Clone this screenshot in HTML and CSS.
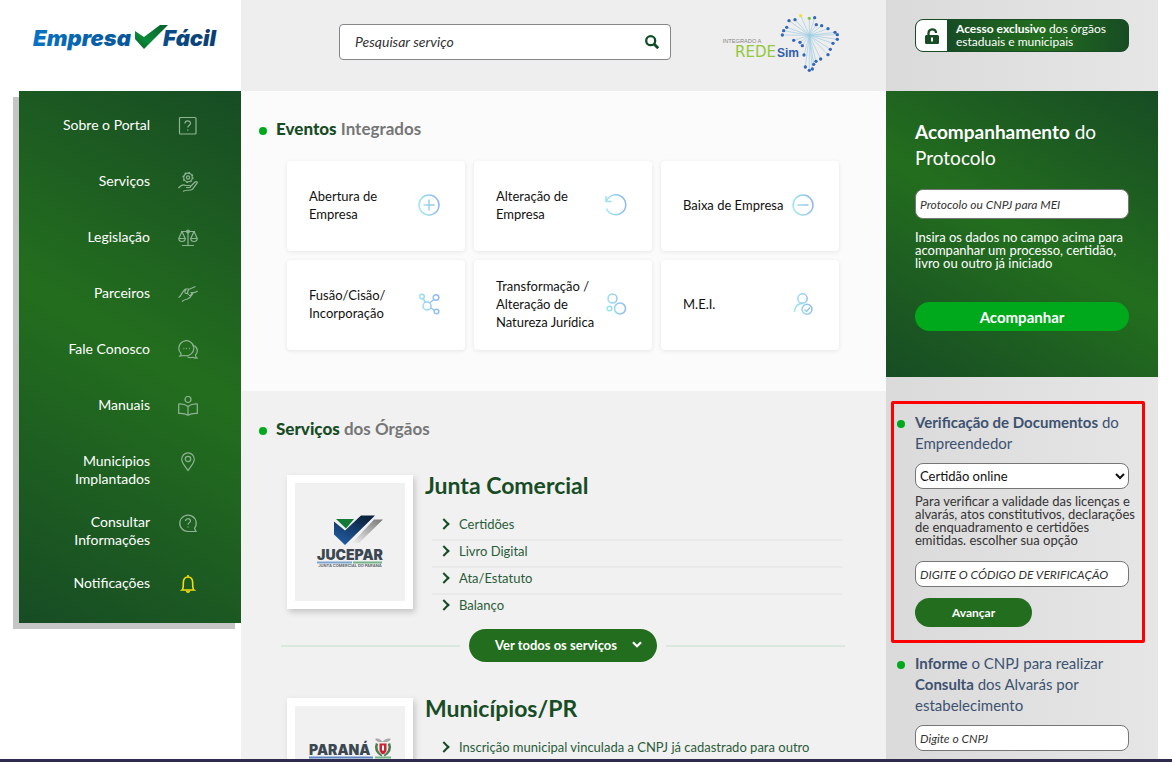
FILE: index.html
```html
<!DOCTYPE html>
<html lang="pt-BR">
<head>
<meta charset="utf-8">
<meta name="viewport" content="width=device-width, initial-scale=1">
<title>Empresa Fácil</title>
<link rel="stylesheet" href="styles.css">
</head>
<body>
<svg class="defs" aria-hidden="true">
  <defs>
    <linearGradient id="ice" gradientUnits="userSpaceOnUse" x1="0" y1="12" x2="22" y2="8">
      <stop offset="0" stop-color="#9debee"/><stop offset="1" stop-color="#8fb3f2"/>
    </linearGradient>
  </defs>
</svg>
<div class="page">
  <div class="left">
    <a class="brand" href="#" aria-label="Empresa Fácil">
      <svg width="190" height="34" viewBox="0 0 190 34">
        <defs>
          <linearGradient id="blue" gradientUnits="userSpaceOnUse" x1="0" y1="0" x2="188" y2="0">
            <stop offset="0" stop-color="#0773c4"/><stop offset="1" stop-color="#0a3d70"/>
          </linearGradient>
          <linearGradient id="tick" x1="0" y1="1" x2="1" y2="0">
            <stop offset="0" stop-color="#0d5a25"/><stop offset=".35" stop-color="#0a8a3a"/><stop offset="1" stop-color="#06602a"/>
          </linearGradient>
        </defs>
        <text class="brand-text" x="1" y="26" fill="url(#blue)">Empresa</text>
        <path d="M103 11l9 6 16-12h8l-24 24-9-10z" fill="url(#tick)"/>
        <text class="brand-text" x="131" y="26" fill="url(#blue)">Fácil</text>
      </svg>
    </a>
    <nav class="menu" aria-label="Menu principal">
      <ul class="menu-list">
        <li><a class="menu-item" href="#"><span class="menu-label">Sobre o Portal</span>
          <svg class="menu-icon" viewBox="0 0 20 20"><rect x="1.500" y="1.500" width="16.500" height="16.500" rx="1"/><path d="M7 7.500c0-3.500 5.500-3.500 5.500-.3 0 2-2.700 2-2.700 4.300M9.800 13.500v1.200"/></svg></a></li>
        <li><a class="menu-item" href="#"><span class="menu-label">Serviços</span>
          <svg class="menu-icon" viewBox="0 0 20 20"><circle cx="10" cy="5.500" r="4.300"/><circle cx="10" cy="5.500" r="1.600"/><circle cx="10" cy="5.500" r="5" stroke-dasharray="1.600 2.300"/><path d="M.5 16c3-3.500 5-4 7-2.500h4c1.500 0 1.500 2 0 2H8M12.500 14.500l4.500-4.500c1.200-1 3 0 2 1.200l-4.500 6c-3 2-7 0-9.500 2.300"/></svg></a></li>
        <li><a class="menu-item" href="#"><span class="menu-label">Legislação</span>
          <svg class="menu-icon" viewBox="0 0 20 20"><path d="M3 3.500h14M10 3v14M4 17.500h12M4 3.500L.8 10.500h6.400L4 3.500M16 3.500l-3.200 7h6.400l-3.200-7M.8 10.500c0 4 6.400 4 6.400 0M12.800 10.500c0 4 6.400 4 6.400 0"/><circle cx="10" cy="3.500" r="1.400"/></svg></a></li>
        <li><a class="menu-item" href="#"><span class="menu-label">Parceiros</span>
          <svg class="menu-icon" viewBox="0 0 20 20"><path d="M.5 13.500c3-1 3.500-6.500 7-8.500h4.500l5.500-2.500M8 5.500C5.500 8 7.500 10.500 9.500 9M11 5.500c-1.500 1.500-1.500 4-.5 5.500M12.500 8.500h3c2 0 3-.5 4-1.500M15.500 8.500c-1.500 2-2.500 5-6 6.500-2.500.3-4 1-5.500 2.500M13.500 8.500c.5 2-1 3-2.500 3"/></svg></a></li>
        <li><a class="menu-item" href="#"><span class="menu-label">Fale Conosco</span>
          <svg class="menu-icon" viewBox="0 0 20 20"><path d="M3 13.500a7.500 7.500 0 1 1 3.500 2L2 16c1-1 1.300-1.500 1-2.500M16.500 5.500c3.500 3 3.500 7 1 9.500 0 1.500.5 2.500 1.500 3-1.500.3-3 0-4-.7-2 .6-4 .4-5.500-.6"/><path d="M5.500 8.500h.8M8.200 8.500H9M11 8.500h.8" stroke-width="1.500"/></svg></a></li>
        <li><a class="menu-item" href="#"><span class="menu-label">Manuais</span>
          <svg class="menu-icon" viewBox="0 0 20 20"><circle cx="10" cy="3.500" r="3"/><path d="M10 10.500C7.500 8.500 4 7.800.7 8v9.500c3.300-.2 6.800.2 9.300 1.800 2.500-1.600 6-2 9.300-1.800V8c-3.300-.2-6.800.5-9.300 2.500v8.800"/></svg></a></li>
        <li><a class="menu-item" href="#"><span class="menu-label">Municípios Implantados</span>
          <svg class="menu-icon" viewBox="0 0 20 20"><path d="M10 18.500C7 14 3.700 11 3.700 7.200a6.300 6.300 0 0 1 12.600 0C16.300 11 13 14 10 18.500z"/><circle cx="10" cy="7" r="2.700"/></svg></a></li>
        <li><a class="menu-item" href="#"><span class="menu-label">Consultar Informações</span>
          <svg class="menu-icon" viewBox="0 0 20 20"><path d="M18 18.500h-8A8.200 8.200 0 1 1 16.500 15.300z"/><path d="M7.500 8c0-3 5-3 5-.2 0 1.800-2.500 1.900-2.500 3.900M10 13.500v1"/></svg></a></li>
        <li><a class="menu-item" href="#"><span class="menu-label">Notificações</span>
          <svg class="menu-icon bell" viewBox="0 0 20 20"><path d="M4 16h12c-1.500-1.200-1.300-3-1.300-7 0-3.700-1.700-6-4.700-6S5.300 5.300 5.300 9c0 4 .2 5.800-1.300 7zM10 1v2M8.500 17c.5 1.500 2.500 1.500 3 0"/></svg></a></li>
      </ul>
    </nav>
  </div>

  <main class="center">
    <header class="topbar">
      <form class="search" role="search">
        <input class="search-input" type="search" placeholder="Pesquisar serviço" aria-label="Pesquisar serviço">
        <button class="search-button" type="button" aria-label="Pesquisar">
          <svg width="14" height="14" viewBox="0 0 14 14" fill="none" stroke="#0f4d27"><circle cx="5.700" cy="5.700" r="4.500" stroke-width="2.300"/><path d="M9 9l4.200 4.200" stroke-width="2.800"/></svg>
        </button>
      </form>
      <a class="redesim" href="#" aria-label="Integrado a Redesim">
        <svg width="122" height="62" viewBox="60 36 366 186">
          <path d="M325 106L264 62M325 106L282 59M325 106L299 47M325 106V55M325 106L341 53M325 106L346 74M325 106L362 77M325 106L381 86M325 106L402 97M325 106L409 104M325 106L409 118M325 106L396 130M325 106L388 148M325 106L381 164M325 106L359 177M325 106L345 184M325 106L338 193M325 106L334 207M325 106V211M325 106L313 201M325 106L309 165M325 106L304 137M325 106L297 127M325 106L278 121M325 106L244 105M325 106L248 92M325 106L257 82" stroke="#9ccbe2" stroke-width="2"/>
          <g class="map-dots"><circle cx="264" cy="62" r="5"/><circle cx="282" cy="59" r="5"/><circle cx="341" cy="53" r="5"/><circle cx="346" cy="74" r="5"/><circle cx="362" cy="77" r="5"/><circle cx="381" cy="86" r="5"/><circle cx="402" cy="97" r="5"/><circle cx="409" cy="104" r="5"/><circle cx="409" cy="118" r="5"/><circle cx="396" cy="130" r="5"/><circle cx="388" cy="148" r="5"/><circle cx="381" cy="164" r="5"/><circle cx="359" cy="177" r="5"/><circle cx="345" cy="184" r="5"/><circle cx="338" cy="193" r="5"/><circle cx="334" cy="207" r="5"/><circle cx="325" cy="211" r="5"/><circle cx="313" cy="201" r="5"/><circle cx="309" cy="165" r="5"/><circle cx="304" cy="137" r="5"/><circle cx="297" cy="127" r="5"/><circle cx="278" cy="121" r="5"/><circle cx="244" cy="105" r="5"/><circle cx="248" cy="92" r="5"/><circle cx="257" cy="82" r="5"/></g>
          <circle cx="299" cy="47" r="5" fill="#ebe04a"/><circle cx="325" cy="55" r="5" fill="#85c441"/>
          <text class="rede-small" x="65" y="128">INTEGRADO A</text>
          <text class="rede" x="102" y="172">REDE</text>
          <text class="sim" x="228" y="172">Sim</text>
        </svg>
      </a>
    </header>

    <section class="events">
      <h2 class="title"><strong>Eventos</strong> Integrados</h2>
      <div class="cards">
        <a class="card" href="#"><span>Abertura de Empresa</span><svg class="card-icon" viewBox="0 0 22 22"><circle cx="11" cy="11" r="10"/><path d="M11 5.500v11M5.500 11h11"/></svg></a>
        <a class="card" href="#"><span>Alteração de Empresa</span><svg class="card-icon" viewBox="0 0 22 22"><path d="M1 2v5.500h5.500M1.500 7A10 10 0 1 1 1.500 14.500"/></svg></a>
        <a class="card" href="#"><span>Baixa de Empresa</span><svg class="card-icon" viewBox="0 0 22 22"><circle cx="11" cy="11" r="10"/><path d="M5.500 11.010L16.500 11"/></svg></a>
        <a class="card" href="#"><span>Fusão/Cisão/ Incorporação</span><svg class="card-icon" viewBox="0 0 22 22"><circle cx="9" cy="13" r="4"/><circle cx="4" cy="3.500" r="2.300"/><circle cx="18" cy="4.500" r="2.800"/><circle cx="18.500" cy="18.500" r="2.300"/><path d="M5 5.500l2.500 4M16 6.500l-4.500 3.500M12.700 14.800l3.700 2.600"/></svg></a>
        <a class="card" href="#"><span>Transformação / Alteração de Natureza Jurídica</span><svg class="card-icon" viewBox="0 0 22 22"><circle cx="7.500" cy="5.500" r="4.500"/><circle cx="15" cy="15.500" r="5.500"/><circle cx="4.500" cy="15.500" r="2.300"/></svg></a>
        <a class="card" href="#"><span>M.E.I.</span><svg class="card-icon" viewBox="0 0 22 22"><circle cx="10.500" cy="5.500" r="4.700"/><path d="M2.500 19c.3-5 3-8.500 8-8.500M12.500 16.500l2 2 3.500-4"/><circle cx="15" cy="16.200" r="5"/></svg></a>
      </div>
    </section>

    <section class="services">
      <h2 class="title"><strong>Serviços</strong> dos Órgãos</h2>
      <article class="agency">
        <div class="agency-logo">
          <svg class="logo-box" viewBox="0 0 110 118" role="img" aria-label="Jucepar">
            <defs>
              <linearGradient id="navy" x1="0" y1="1" x2=".6" y2="0"><stop offset="0" stop-color="#2363ad"/><stop offset="1" stop-color="#0c2340"/></linearGradient>
              <linearGradient id="grey" x1="0" y1="1" x2="1" y2="0"><stop offset="0" stop-color="#efefef"/><stop offset="1" stop-color="#777"/></linearGradient>
            </defs>
            <path d="M79 36.500h9L64 60h-7z" fill="url(#grey)"/>
            <path d="M41 36h18l-8 9.500z" fill="#147a38"/>
            <path d="M39 38.500l11 9L66 32.500h14L50 62 39 51.500z" fill="url(#navy)"/>
            <text class="jucepar" x="55" y="77">JUCEPAR</text>
            <path d="M22 79.500h35" stroke="#7ea5d2" stroke-width="2"/><path d="M58 79.500h29" stroke="#76b589" stroke-width="2"/>
            <text class="jucepar-sub" x="55" y="84">JUNTA COMERCIAL DO PARANÁ</text>
          </svg>
        </div>
        <div class="agency-body">
          <h3 class="agency-name">Junta Comercial</h3>
          <ul class="links">
            <li><a href="#">Certidões</a></li>
            <li><a href="#">Livro Digital</a></li>
            <li><a href="#">Ata/Estatuto</a></li>
            <li><a href="#">Balanço</a></li>
          </ul>
        </div>
      </article>
      <div class="more">
        <button class="more-button" type="button">Ver todos os serviços
          <svg width="10" height="7" viewBox="0 0 10 7" fill="none" stroke="#fff" stroke-width="2.200"><path d="M1 1.300l4 4 4-4"/></svg></button>
      </div>
      <article class="agency">
        <div class="agency-logo">
          <svg class="logo-box" viewBox="0 0 110 118" role="img" aria-label="Paraná">
            <text class="parana" x="14" y="49">PARANÁ</text>
            <path d="M14 51.500h64" stroke="#5c86bd" stroke-width="2"/><path d="M80 51.500h16" stroke="#76b589" stroke-width="2"/>
            <path d="M80 33c3-1 5 0 7.500 2.500 3-2.500 5-3.500 8.500-2.500-2 3-4 3-6 3h-4c-2 0-4 0-6-3z" fill="#aaa"/>
            <path d="M82 37.500c-2 5 0 9 5 12M94 37.500c2 5 0 9-5 12" fill="none" stroke="#4a7d52" stroke-width="2.500"/>
            <path d="M84 37h8v7c0 2-2 4-4 5-2-1-4-3-4-5z" fill="#c82634" stroke="#e8e8e8"/><path d="M88 39.500v5" stroke="#fff" stroke-width="2"/>
          </svg>
        </div>
        <div class="agency-body">
          <h3 class="agency-name">Municípios/PR</h3>
          <ul class="links">
            <li><a href="#">Inscrição municipal vinculada a CNPJ já cadastrado para outro</a></li>
          </ul>
        </div>
      </article>
    </section>
  </main>

  <aside class="right">
    <div class="access-area">
      <a class="access" href="#">
        <span class="access-lock"><svg width="16" height="16" viewBox="0 0 16 16"><rect x="1" y="7" width="14" height="9" rx="1.500" fill="#174c24"/><path d="M4.500 8V5.500c0-5.500 7.500-5.500 7.500-.5" fill="none" stroke="#174c24" stroke-width="2.300"/><path d="M8 9.500v4" stroke="#fff" stroke-width="2"/></svg></span>
        <span class="access-text"><strong>Acesso exclusivo</strong> dos órgãos estaduais e municipais</span>
      </a>
    </div>
    <form class="protocol">
      <h2 class="protocol-title"><strong>Acompanhamento</strong> do Protocolo</h2>
      <input class="field field-tall" type="text" placeholder="Protocolo ou CNPJ para MEI" aria-label="Protocolo ou CNPJ para MEI">
      <p class="hint">Insira os dados no campo acima para acompanhar um processo, certidão, livro ou outro já iniciado</p>
      <button class="track" type="button">Acompanhar</button>
    </form>
    <form class="side-form highlighted">
      <h2 class="side-title"><strong>Verificação de Documentos</strong> do Empreendedor</h2>
      <select class="field select" aria-label="Tipo de documento"><option>Certidão online</option></select>
      <p class="hint hint-dark">Para verificar a validade das licenças e alvarás, atos constitutivos, declarações de enquadramento e certidões emitidas. escolher sua opção</p>
      <input class="field" type="text" placeholder="DIGITE O CÓDIGO DE VERIFICAÇÃO" aria-label="Código de verificação">
      <button class="go" type="button">Avançar</button>
    </form>
    <form class="side-form">
      <h2 class="side-title"><strong>Informe</strong> o CNPJ para realizar <strong>Consulta</strong> dos Alvarás por estabelecimento</h2>
      <input class="field" type="text" placeholder="Digite o CNPJ" aria-label="CNPJ">
    </form>
  </aside>
</div>
<div class="bottom-edge"></div>
</body>
</html>
```
FILE: styles.css
```css
* { box-sizing: border-box; }

body {
  margin: 0;
  height: 100vh;
  display: flex;
  flex-direction: column;
  overflow: hidden;
  background: #fff;
  font-family: Lato, "Open Sans", sans-serif;
  font-size: 14px;
  line-height: 18px;
}

h2, h3, p, ul { margin: 0; padding: 0; }
ul { list-style: none; }
a { color: inherit; text-decoration: none; }
button, input, select { font: inherit; margin: 0; }
button { border: 0; cursor: pointer; }

.defs { position: absolute; width: 0; height: 0; }

.page {
  flex: 1;
  min-height: 0;
  overflow: hidden;
  display: grid;
  grid-template-columns: 241px 1fr 272px;
  padding-right: 14px;
}

.bottom-edge { height: 3px; background: #2f2b50; }

/* Left column */
.left { padding-left: 19px; }
.brand { display: flex; height: 91px; padding: 20px 0 0 13px; }
.brand svg { flex: none; }
.brand-text { font: italic 900 22px Inter, sans-serif; }

.menu {
  background: linear-gradient(30deg, #174c24, #236e1e 52%, #174c24);
  box-shadow: -6px 6px 0 #c5c5c5;
}
.menu-list { display: grid; gap: 25px; padding: 25px 43px 18px 16px; }
.menu-item {
  display: flex;
  justify-content: flex-end;
  align-items: flex-start;
  gap: 28px;
  min-height: 31px;
  color: #fff;
  text-align: right;
}
.menu-label { width: 96px; }
.menu-icon {
  flex: none;
  width: 20px;
  height: 20px;
  fill: none;
  stroke: #8fb494;
  stroke-width: 1.200;
}
.bell { stroke: #f4dd14; stroke-width: 1.600; }

/* Centre column */
.topbar { display: flex; gap: 50px; height: 91px; padding: 12px 40px 0 98px; background: #eee; }
.search {
  display: flex;
  align-items: center;
  flex: 1;
  max-width: 332px;
  height: 36px;
  margin-top: 12px;
  padding: 0 10px 0 15px;
  background: #fff;
  border: 1px solid #85858a;
  border-radius: 4px;
}
.search-input { flex: 1; min-width: 0; padding: 0; border: 0; outline: 0; background: none; }
.search-button { display: flex; padding: 1px; background: none; }
::placeholder { color: #333; opacity: 1; font-style: italic; }
.redesim svg { display: block; }
.map-dots { fill: #3567b6; }
.rede-small { font: 17px "Liberation Sans", sans-serif; fill: #858585; }
.rede { font: 45px "DejaVu Sans", sans-serif; fill: #93c83d; }
.sim { font: bold 36px "Liberation Sans", sans-serif; fill: #3360ad; }

.title { position: relative; padding-left: 35px; font-size: 17px; line-height: 20px; color: #767676; }
.title strong { color: #174c24; }
.title::before, .side-title::before {
  content: "";
  position: absolute;
  top: 8px;
  left: 18px;
  width: 8px;
  height: 8px;
  border-radius: 50%;
  background: #00a81b;
}

.events { height: 300px; padding-top: 28px; background: #fbfbfb; }
.cards {
  display: grid;
  grid-template-columns: repeat(3, 1fr);
  grid-auto-rows: 90px;
  gap: 9px;
  padding: 22px 47px 0 46px;
  font-size: 13px;
}
.card {
  display: flex;
  align-items: center;
  justify-content: space-between;
  padding: 0 25px 2px 22px;
  background: #fff;
  border-radius: 4px;
  box-shadow: 0 1px 4px #e6e6e6;
  color: #111;
}
.card-icon { flex: none; width: 22px; height: 22px; fill: none; stroke: url(#ice); stroke-width: 1.500; }

.services { padding-top: 28px; background: #f1f1f1; height: 100%; }
.agency { display: flex; align-items: flex-start; gap: 12px; padding: 0 44px 0 46px; }
.title + .agency { padding-top: 36px; }
.agency-logo {
  flex: none;
  width: 126px;
  height: 134px;
  padding: 8px;
  background: #fff;
  box-shadow: 2px 3px 6px #c4c4c4;
}
.logo-box { display: block; width: 110px; height: 118px; background: #f1f1f1; }
.jucepar { font: 900 14px Inter, sans-serif; fill: #3b4852; text-anchor: middle; }
.jucepar-sub { font: bold 4px Inter, sans-serif; fill: #5f6870; text-anchor: middle; }
.parana { font: 900 14px Inter, sans-serif; fill: #3b4852; }
.agency-body { flex: 1; min-width: 0; }
.agency-name { font-size: 23px; line-height: 20px; color: #174c24; }
.links { margin: 17px 0 0 7px; color: #2b5c39; font-size: 13px; }
.links li { height: 27px; padding: 3px 0 0 27px; white-space: nowrap; position: relative; }
.links li + li { border-top: 2px solid #e9e9e9; padding-top: 1px; }
.links li::before {
  content: "";
  position: absolute;
  top: 8px;
  left: 8px;
  width: 6px;
  height: 6px;
  border: solid #174c24;
  border-width: 2px 2px 0 0;
  transform: rotate(45deg);
}
.links li + li::before { top: 6px; }
.more { display: flex; align-items: center; gap: 9px; padding: 9px 41px 36px 40px; }
.more::before, .more::after { content: ""; flex: 1; height: 2px; background: #d9e9de; }
.more-button {
  display: flex;
  align-items: center;
  justify-content: flex-end;
  gap: 15px;
  width: 188px;
  height: 33px;
  padding: 0 15px 2px;
  border-radius: 17px;
  background: #236e1e;
  color: #fff;
  font-size: 13px;
  font-weight: bold;
}

/* Right column */
.right { background: linear-gradient(90deg, #dadada, #e6e6e6); }
.access-area { height: 91px; padding: 19px 29px 0; }
.access {
  display: flex;
  height: 33px;
  border: 1px solid #174c24;
  border-radius: 8px;
  overflow: hidden;
  background: linear-gradient(90deg, #174c24 15%, #236e1e 58%, #174c24);
  color: #fff;
  font-size: 12px;
  line-height: 13px;
}
.access-lock { display: flex; flex: none; align-items: center; justify-content: center; width: 31px; background: #fff; }
.access-text { padding: 2px 4px 0 9px; }

.protocol {
  height: 286px;
  padding: 28px 29px 0;
  background: linear-gradient(30deg, #174c24, #236e1e 50%, #174c24);
  color: #fff;
}
.protocol-title { font-size: 19px; line-height: 26px; font-weight: normal; }
.field {
  display: block;
  width: 100%;
  height: 26px;
  padding: 0 4px;
  border: 1px solid #767676;
  border-radius: 8px;
  background: #fff;
  color: #111;
  font-size: 12px;
}
.field-tall { height: 30px; margin-top: 18px; }
.select { padding: 0; font-size: 13px; }
.hint { margin: 12px -8px 0 0; font-size: 13px; line-height: 13px; }
.track {
  display: block;
  width: 100%;
  height: 29px;
  margin-top: 32px;
  border-radius: 15px;
  background: #00a81b;
  color: #fff;
  font-size: 15px;
  font-weight: bold;
}
.side-form { padding: 7px 29px 0; }
.highlighted {
  margin: 24px 13px 3px 5px;
  padding: 8px 13px 13px 21px;
  border: 3px solid #f00;
  border-radius: 2px;
}
.side-title { position: relative; margin-right: -10px; font-size: 15px; line-height: 21px; font-weight: normal; color: #3d5270; }
.side-title::before { left: -18px; }
.side-form .field { margin-top: 9px; }
.hint-dark { margin-top: 6px; color: #333; }
.side-form .hint + .field { margin-top: 14px; }
.go {
  display: block;
  width: 117px;
  height: 29px;
  margin-top: 11px;
  border-radius: 15px;
  background: #236e1e;
  color: #fff;
  font-size: 12px;
  font-weight: bold;
}
```
